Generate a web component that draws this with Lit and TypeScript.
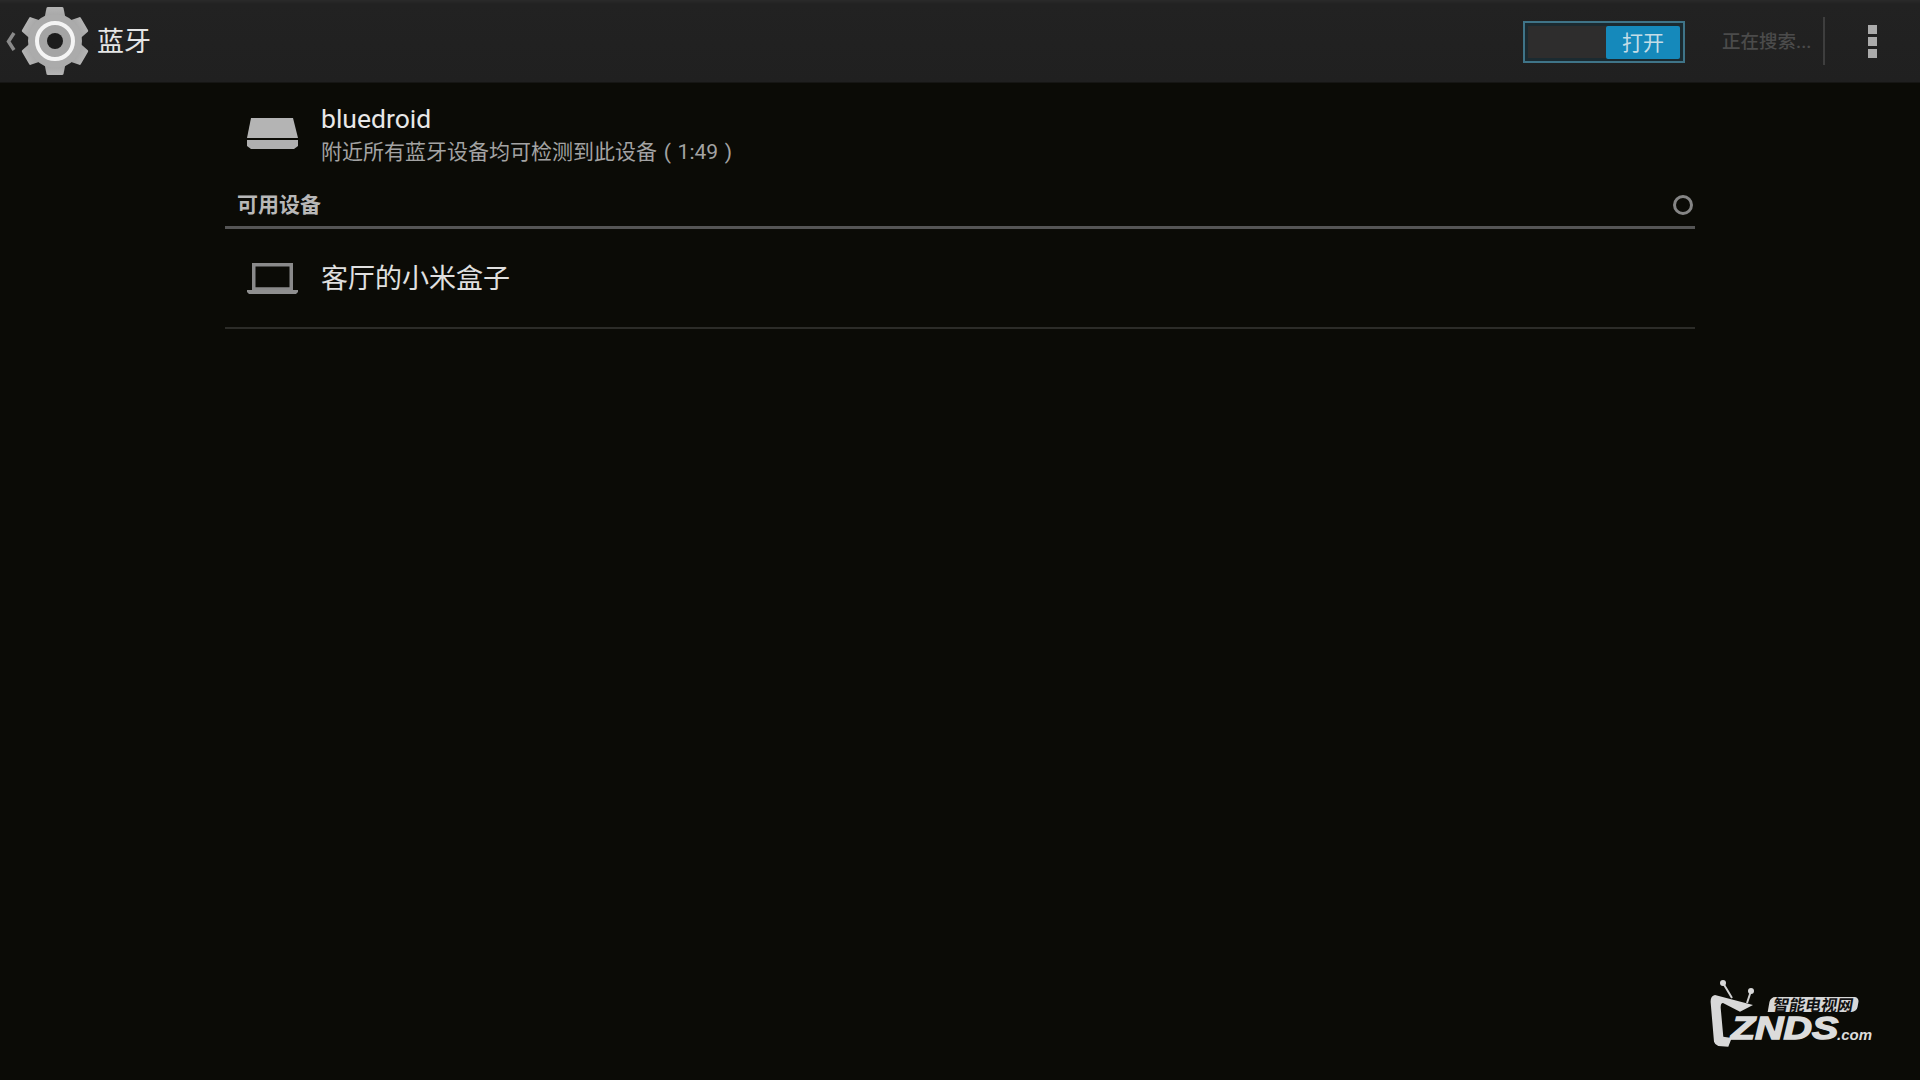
import { LitElement, html, css, svg } from "lit";
import { customElement } from "lit/decorators.js";

const teeth = [0, 60, 120, 180, 240, 300].map(
  (a) => svg`<path transform="rotate(${a} 35 35)" d="M24.500 12 L26.500 2 Q26.700 1 28 1 H42 Q43.300 1 43.500 2 L45.500 12 Z" fill="url(#g)"/>`
);

@customElement("app-root")
export class AppRoot extends LitElement {
  static styles = css`
    :host { display: block; width: 1920px; height: 1080px; position: relative; overflow: hidden;
      background: #0b0b06; font-family: Roboto, "Noto Sans CJK SC", sans-serif; color: #e4e4e4; }
    .bar { height: 83px; box-sizing: border-box; display: flex; align-items: center;
      background: linear-gradient(#2a2a2a 0, #222 4px, #202020 100%); border-bottom: 1px solid #161614; }
    .chev { width: 12px; height: 21px; margin-left: 5px; flex: none; }
    .gear { width: 70px; height: 70px; margin-left: 3px; flex: none; }
    .title { font-size: 27px; margin: 2px 0 0 7px; color: #e6e6e6; line-height: 30px; }
    .spacer { flex: 1; }
    .switch { box-sizing: border-box; width: 162px; height: 42px; border: 2px solid #3f7488;
      background: #1b2a30; padding: 3px; display: flex; justify-content: flex-end; margin-top: 1px; }
    .track { flex: 1; background: #2e2d2d; display: flex; justify-content: flex-end; }
    .thumb { width: 74px; background: #1589bb; border-radius: 2px; text-align: center;
      font-size: 21px; line-height: 35px; height: 33px; color: #c4dde7; }
    .search { font-size: 18.5px; color: #4b4b4b; margin: -2px 0 0 37px; width: 89px; white-space: nowrap; font-weight: 500; }
    .divider { width: 2px; height: 48px; background: #3e3e3e; margin-left: 12px; }
    .dots { display: flex; flex-direction: column; gap: 3px; margin-left: 43px; margin-right: 43px; }
    .dots i { display: block; width: 9px; height: 9px; background: #ababab; }
    .list { width: 1470px; margin-left: 225px; }
    .self { display: flex; align-items: center; height: 100px; }
    .icon { width: 60px; height: 40px; margin-left: 17px; margin-right: 19px; flex: none; }
    .self .icon { margin-top: 1px; }
    .texts { margin-top: 1px; }
    .name { font-size: 26.5px; line-height: 34px; color: #e8e8e8; }
    .sub { font-size: 21px; line-height: 26px; color: #a3a3a3; margin-top: 3px; white-space: pre; word-spacing: 1.5px; }
    .head { height: 46px; box-sizing: border-box; display: flex; align-items: center; justify-content: space-between;
      padding: 0 2px 4px 12px; border-bottom: 3px solid #555; font-size: 21px; font-weight: 700; color: #b8b8b8; }
    .spin { width: 20px; height: 20px; box-sizing: border-box; border: 3px solid #858585; border-radius: 50%; margin-top: 4px; }
    .row { display: flex; align-items: center; height: 100px; box-sizing: border-box; border-bottom: 2px solid #2c2c28; padding-bottom: 3px; }
    .row .icon { margin-top: 2px; }
    .rname { font-size: 27px; color: #e0e0e0; }
    .logo { position: absolute; left: 1708px; top: 978px; width: 168px; height: 72px; }
    .znds { position: absolute; left: 23px; top: 36px; font: italic 700 31px/30px "Liberation Sans", sans-serif;
      color: #dcdcdc; transform-origin: 0 50%; transform: scaleX(1.27); -webkit-text-stroke: 1.4px #dcdcdc; }
    .com { position: absolute; left: 129px; top: 48px; font: italic 700 15px/18px "Liberation Sans", sans-serif; color: #dcdcdc; }
    .pill { position: absolute; left: 61px; top: 19px; width: 89px; height: 15px; background: #d8d8d8; border-radius: 5px 5px 5px 0;
      transform: skewX(-10deg); color: #111; font: 700 16px/15px "Noto Sans CJK SC", sans-serif; text-align: center; white-space: nowrap; }
    .tv { position: absolute; left: 0; top: 0; width: 60px; height: 72px; }
  `;

  render() {
    return html`
      <div class="bar">
        <svg class="chev" viewBox="0 0 12 21"><path d="M9 2 L3.500 10.500 L9 19" fill="none" stroke="#8a8a8a" stroke-width="3.500"/></svg>
        <svg class="gear" viewBox="0 0 70 70">
          <defs><linearGradient id="g" x1="0" y1="0" x2="0" y2="1"><stop offset="0" stop-color="#b4b4b4"/><stop offset="1" stop-color="#a4a4a4"/></linearGradient></defs>
          ${teeth}
          <circle cx="35" cy="35" r="27" fill="#ababab"/>
          <circle cx="35" cy="35" r="18" fill="#a4a4a4" stroke="#f4f4f4" stroke-width="4"/>
          <circle cx="35" cy="35" r="8" fill="#1c1c1c"/>
        </svg>
        <div class="title">蓝牙</div>
        <div class="spacer"></div>
        <div class="switch"><div class="track"><div class="thumb">打开</div></div></div>
        <div class="search">正在搜索...</div>
        <div class="divider"></div>
        <div class="dots"><i></i><i></i><i></i></div>
      </div>
      <div class="list">
        <div class="self">
          <svg class="icon" viewBox="0 0 60 40">
            <path d="M9 4 H51 L56 24 H5 Z" fill="#b4b4b4"/>
            <path d="M5 26 H56 V32 L52 35 H9 L5 32 Z" fill="#b0b0b0"/>
          </svg>
          <div class="texts">
            <div class="name">bluedroid</div>
            <div class="sub">附近所有蓝牙设备均可检测到此设备 ( 1:49 )</div>
          </div>
        </div>
        <div class="head"><span>可用设备</span><div class="spin"></div></div>
        <div class="row">
          <svg class="icon" viewBox="0 0 60 40">
            <path d="M11.750 6.750 H49.250 V31 H11.750 Z" fill="none" stroke="#8a8a8a" stroke-width="3.500"/>
            <path d="M5 32 H56 V34 L54 36 H7 L5 34 Z" fill="#8f8f8f"/>
          </svg>
          <div class="rname">客厅的小米盒子</div>
        </div>
      </div>
      <div class="logo">
        <svg class="tv" viewBox="0 0 60 72">
          <path d="M2.700 25 Q2 18 7 17 L45 27 L32 33.700 L15 25 Q12.500 25 12.700 30 L15.300 58.700 L23.700 60 L20.300 68.700 L10.300 68 Q7 67 6 63.700 Z" fill="#d8d8d8"/>
          <path d="M15 5 L24 20 M43 13 L39 25" stroke="#cfcfcf" stroke-width="2" fill="none"/>
          <circle cx="15" cy="5" r="3" fill="#d8d8d8"/><circle cx="43" cy="13" r="3" fill="#d8d8d8"/>
        </svg>
        <div class="pill">智能电视网</div>
        <div class="znds">ZNDS</div>
        <div class="com">.com</div>
      </div>
    `;
  }
}
